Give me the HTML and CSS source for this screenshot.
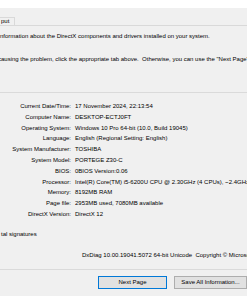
FILE: index.html
```html
<!DOCTYPE html>
<html lang="en">

<head>
    <meta charset="UTF-8" />
    <meta name="viewport" content="width=device-width, initial-scale=1.0" />
    <title>DirectX Diagnostic Tool</title>
    <link rel="stylesheet" href="styles.css">
</head>

<body>

    <div class="window">
        <div class="titlebar"></div>

        <div class="tabs">
            <div class="tab">put</div>
        </div>

        <div class="page">
            <p class="intro first">nformation about the DirectX components and drivers installed on your system.</p>
            <p class="intro second">causing the problem, click the appropriate tab above.&nbsp; Otherwise, you can use the "Next Page" button below to visit each page in sequence.</p>

            <div class="group">
                <div class="info">
                    <span class="label">Current Date/Time:</span><span class="value">17 November 2024, 22:13:54</span>
                    <span class="label">Computer Name:</span><span class="value">DESKTOP-ECTJ0FT</span>
                    <span class="label">Operating System:</span><span class="value">Windows 10 Pro 64-bit (10.0, Build 19045)</span>
                    <span class="label">Language:</span><span class="value">English (Regional Setting: English)</span>
                    <span class="label">System Manufacturer:</span><span class="value">TOSHIBA</span>
                    <span class="label">System Model:</span><span class="value">PORTEGE Z30-C</span>
                    <span class="label">BIOS:</span><span class="value">0BIOS Version:0.06</span>
                    <span class="label">Processor:</span><span class="value">Intel(R) Core(TM) i5-6200U CPU @ 2.30GHz (4 CPUs), ~2.4GHz</span>
                    <span class="label">Memory:</span><span class="value">8192MB RAM</span>
                    <span class="label">Page file:</span><span class="value">2953MB used, 7080MB available</span>
                    <span class="label">DirectX Version:</span><span class="value">DirectX 12</span>
                </div>
            </div>

            <div class="check">tal signatures</div>

            <div class="version">DxDiag 10.00.19041.5072 64-bit Unicode&nbsp; Copyright © Microsoft. All rights reserved.</div>
        </div>

        <div class="footer">
            <button class="btn default">Next Page</button>
            <button class="btn">Save All Information...</button>
        </div>
    </div>

</body>

</html>
```

FILE: styles.css
```css
body {
    margin: 0;
    padding: 0;
    background-color: #f0f0f0;
    font-family: "Liberation Sans", Arial, sans-serif;
    font-size: 6px;
    color: #000;
    overflow: hidden;
}

.window {
    width: 247px;
    height: 296px;
    overflow: hidden;
    white-space: nowrap;
}

.titlebar {
    height: 8px;
    background: #fff;
}

.tabs {
    display: flex;
    margin-top: 9px;
    height: 8px;
    border-bottom: 1px solid #d9d9d9;
}

.tab {
    border: 1px solid #d9d9d9;
    border-left: none;
    border-bottom: none;
    padding: 0 5px 0 1px;
    line-height: 7px;
    background: #f0f0f0;
}

.page {
    padding-top: 5px;
}

.intro {
    margin: 0;
    line-height: 11px;
}

.intro.second {
    margin-top: 12px;
    text-indent: -2px;
}

.group {
    margin-top: 27px;
    border-top: 1px solid #dadada;
    padding-top: 8px;
}

.info {
    display: grid;
    grid-template-columns: 74px auto;
    line-height: 10.8px;
}

.label {
    text-align: right;
    padding-right: 3px;
}

.value {
    padding-left: 1px;
}

.check {
    margin-top: 9px;
    line-height: 11px;
    padding-left: 1px;
}

.version {
    margin-top: 10px;
    line-height: 11px;
    padding-left: 82px;
}

.footer {
    margin-top: 8px;
    border-top: 1px solid #dadada;
    padding-top: 6px;
    display: flex;
    gap: 7px;
    padding-left: 98px;
}

.btn {
    height: 13px;
    padding: 0;
    font-family: inherit;
    font-size: 6px;
    color: #000;
    background: #e1e1e1;
    border: 1px solid #adadad;
    border-radius: 0;
}

.btn.default {
    width: 69px;
    border-color: #0078d7;
}

.btn:last-child {
    width: 73px;
}
```
